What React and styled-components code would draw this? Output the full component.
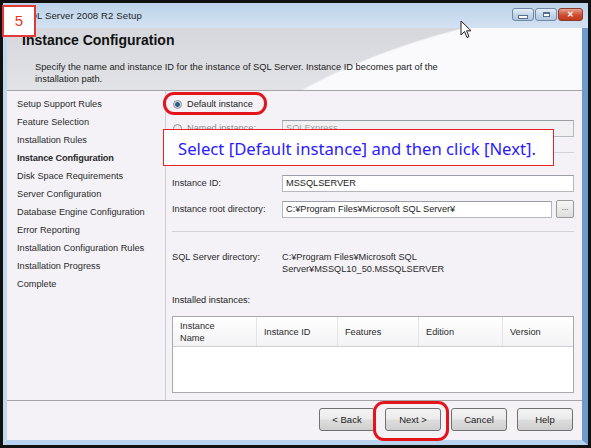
import React from 'react'
import styled, { createGlobalStyle } from 'styled-components'

const GlobalStyle = createGlobalStyle`
  html, body {
    margin: 0;
    padding: 0;
    background: #111;
  }
  * {
    box-sizing: border-box;
  }
`

const Page = styled.div`
  position: relative;
  width: 591px;
  height: 448px;
  padding: 3px 3px 3px 3px;
  background: #111;
  font-family: "Liberation Sans", Arial, sans-serif;
  color: #222;
  overflow: hidden;
`

const Window = styled.div`
  height: 100%;
  display: flex;
  flex-direction: column;
  background: #c2d7ee;
`

const TitleBar = styled.div`
  height: 25px;
  display: flex;
  align-items: center;
  padding: 0 5px 0 3px;
  background: linear-gradient(#bcd2ea, #d3e2f2);
`

const AppIcon = styled.div`
  width: 12px;
  height: 12px;
  margin-right: 5px;
  border-radius: 2px;
  background: linear-gradient(135deg, #d94c2c, #8c2214);
`

const Title = styled.div`
  font-size: 9.6px;
  color: #1e1e1e;
  letter-spacing: 0.1px;
`

const WinButtons = styled.div`
  margin-left: auto;
  display: flex;
  gap: 1px;
  margin-top: -2px;
`

const WinButton = styled.div`
  width: ${p => (p.$close ? 25 : 22)}px;
  height: 13px;
  border: 1px solid ${p => (p.$close ? '#8a3a2a' : '#6f88a8')};
  border-radius: 3px;
  background: ${p =>
    p.$close
      ? 'linear-gradient(#e8a291, #cf4b31 55%, #c0391f)'
      : 'linear-gradient(#e6eef8, #c3d4e8 55%, #b3c7df)'};
  display: flex;
  align-items: center;
  justify-content: center;
  color: #fff;
  font-size: 8px;
  font-weight: bold;
`

const MinGlyph = styled.div`
  width: 8px;
  height: 2px;
  margin-top: 4px;
  background: #fff;
  border: 1px solid #55708f;
  box-sizing: content-box;
`

const MaxGlyph = styled.div`
  width: 7px;
  height: 5px;
  border: 1px solid #55708f;
  border-top-width: 2px;
  background: #fff;
`

const ClientFrame = styled.div`
  flex: 1;
  display: flex;
  flex-direction: column;
  border-left: 4px solid #c3d8ef;
  border-right: 6px solid #6f9bcc;
  border-bottom: 5px solid #b8d1ed;
  background: #f4f2f7;
`

const Header = styled.div`
  height: 63px;
  padding: 4px 0 0 15px;
  border-bottom: 1px solid #a4a4a8;
  background:
    radial-gradient(ellipse 557px 290px at 700px 260px, #fafafc 99.4%, rgba(250, 250, 252, 0) 100%),
    linear-gradient(#d6d7dc, #e2e3e7);
`

const HeaderTitle = styled.div`
  font-size: 14px;
  font-weight: bold;
  line-height: 17px;
  color: #111;
`

const HeaderText = styled.div`
  margin: 12px 0 0 13px;
  width: 440px;
  font-size: 9.3px;
  line-height: 12px;
  color: #222;
`

const Body = styled.div`
  height: 309px;
  display: flex;
`

const Nav = styled.div`
  width: 159px;
  padding: 4px 0 0 10px;
  border-right: 1px solid #cfcdd3;
`

const NavItem = styled.div`
  font-size: 9.2px;
  line-height: 18px;
  color: #2a2a2a;
  font-weight: ${p => (p.$active ? 'bold' : 'normal')};
  letter-spacing: ${p => (p.$active ? '-0.15px' : '0')};
`

const Panel = styled.div`
  flex: 1;
  padding: 1px 8px 0 6px;
  display: flex;
  flex-direction: column;
  font-size: 9.2px;
`

const Row = styled.div`
  height: ${p => p.$h || 26}px;
  display: flex;
  align-items: center;
`

const Radio = styled.div`
  width: 9px;
  height: 9px;
  border-radius: 50%;
  border: 1px solid #8c8f94;
  background: ${p =>
    p.$checked
      ? 'radial-gradient(circle, #2e5a86 0 2px, #9fb6cc 2.5px, #eef0f3 3.5px)'
      : 'linear-gradient(#e4e4e6, #f8f8f8)'};
  margin: 0 5px 0 1px;
`

const RadioLabel = styled.div`
  color: ${p => (p.$disabled ? '#8a8a8a' : '#222')};
  width: ${p => p.$w || 'auto'};
`

const Label = styled.div`
  width: 110px;
  flex-shrink: 0;
  color: #2a2a2a;
`

const TextBox = styled.div`
  flex: 1;
  height: 17px;
  border: 1px solid #b5b8be;
  border-top-color: #9a9ea6;
  background: ${p => (p.$disabled ? '#f1f0f2' : '#fff')};
  color: ${p => (p.$disabled ? '#a0a0a0' : '#222')};
  padding-left: 3px;
  display: flex;
  align-items: center;
`

const BrowseButton = styled.div`
  width: 18px;
  height: 18px;
  margin-left: 4px;
  border: 1px solid #9a9a9a;
  border-radius: 2px;
  background: linear-gradient(#f6f6f6, #dedede);
  display: flex;
  align-items: center;
  justify-content: center;
  font-size: 8px;
  color: #333;
  padding-bottom: 3px;
`

const Separator = styled.div`
  height: 1px;
  background: #d4d2d8;
  margin-top: ${p => p.$mt}px;
  margin-bottom: ${p => p.$mb}px;
`

const InfoRow = styled.div`
  display: flex;
  line-height: 12px;
  margin-top: ${p => p.$mt || 0}px;
`

const InfoValue = styled.div`
  color: #2a2a2a;
`

const Table = styled.div`
  margin-top: 10px;
  height: 77px;
  border: 1px solid #a9a9ad;
  background: #fff;
`

const TableHead = styled.div`
  display: grid;
  grid-template-columns: 84px 81px 81px 84px 1fr;
  height: 30px;
  border-bottom: 1px solid #d0d0d4;
  background: linear-gradient(#ffffff, #f3f3f5);
`

const HeadCell = styled.div`
  display: flex;
  align-items: center;
  padding-left: 7px;
  line-height: 12px;
  color: #2a2a2a;
  border-right: ${p => (p.$last ? 'none' : '1px solid #e4e4e8')};
`

const Footer = styled.div`
  flex: 1;
  border-top: 1px solid #a4a4a8;
  display: flex;
  justify-content: flex-end;
  align-items: flex-start;
  gap: 10px;
  padding: 7px 9px 0 0;
`

const Button = styled.div`
  width: 56px;
  height: 23px;
  border: 1px solid #707070;
  border-radius: 3px;
  background: linear-gradient(#f3f3f3, #ebebeb 48%, #dddddd 52%, #cfcfcf);
  display: flex;
  align-items: center;
  justify-content: center;
  font-size: 9.5px;
  color: #222;
`

/* annotations drawn over the screenshot */
const StepBadge = styled.div`
  position: absolute;
  left: 2px;
  top: 5px;
  width: 34px;
  height: 32px;
  background: #fff;
  border: 2px solid #e23a36;
  color: #e8342f;
  font-size: 15px;
  display: flex;
  align-items: center;
  justify-content: center;
  padding-bottom: 1px;
`

const Oval = styled.div`
  position: absolute;
  left: ${p => p.$x}px;
  top: ${p => p.$y}px;
  width: ${p => p.$w}px;
  height: ${p => p.$h}px;
  border: 3px solid #e3141c;
  border-radius: 11px;
`

const Callout = styled.div`
  position: absolute;
  left: 163px;
  top: 129px;
  width: 391px;
  height: 37px;
  background: #fff;
  border: 1.5px solid #e8202a;
  color: #2b1cff;
  font-family: "Noto Sans", "Liberation Sans", sans-serif;
  font-size: 16.7px;
  display: flex;
  align-items: center;
  padding: 2px 0 0 14px;
  white-space: nowrap;
`

const Cursor = styled.svg`
  position: absolute;
  left: 460px;
  top: 20px;
`

const navItems = [
  'Setup Support Rules',
  'Feature Selection',
  'Installation Rules',
  'Instance Configuration',
  'Disk Space Requirements',
  'Server Configuration',
  'Database Engine Configuration',
  'Error Reporting',
  'Installation Configuration Rules',
  'Installation Progress',
  'Complete',
]

const columns = ['Instance Name', 'Instance ID', 'Features', 'Edition', 'Version']

export default function App() {
  return (
    <Page>
      <GlobalStyle />
      <Window>
        <TitleBar>
          <AppIcon />
          <Title>SQL Server 2008 R2 Setup</Title>
          <WinButtons>
            <WinButton><MinGlyph /></WinButton>
            <WinButton><MaxGlyph /></WinButton>
            <WinButton $close>✕</WinButton>
          </WinButtons>
        </TitleBar>
        <ClientFrame>
          <Header>
            <HeaderTitle>Instance Configuration</HeaderTitle>
            <HeaderText>
              Specify the name and instance ID for the instance of SQL Server. Instance ID becomes part of the
              installation path.
            </HeaderText>
          </Header>
          <Body>
            <Nav>
              {navItems.map(item => (
                <NavItem key={item} $active={item === 'Instance Configuration'}>{item}</NavItem>
              ))}
            </Nav>
            <Panel>
              <Row $h={24}>
                <Radio $checked />
                <RadioLabel>Default instance</RadioLabel>
              </Row>
              <Row $h={24}>
                <Radio />
                <RadioLabel $disabled $w="95px">Named instance:</RadioLabel>
                <TextBox $disabled>SQLExpress</TextBox>
              </Row>
              <Separator $mt={12} $mb={17} />
              <Row>
                <Label>Instance ID:</Label>
                <TextBox>MSSQLSERVER</TextBox>
              </Row>
              <Row>
                <Label>Instance root directory:</Label>
                <TextBox>C:¥Program Files¥Microsoft SQL Server¥</TextBox>
                <BrowseButton>...</BrowseButton>
              </Row>
              <Separator $mt={9} $mb={0} />
              <InfoRow $mt={19}>
                <Label>SQL Server directory:</Label>
                <InfoValue>
                  C:¥Program Files¥Microsoft SQL<br />
                  Server¥MSSQL10_50.MSSQLSERVER
                </InfoValue>
              </InfoRow>
              <InfoRow $mt={19}>Installed instances:</InfoRow>
              <Table>
                <TableHead>
                  {columns.map((c, i) => (
                    <HeadCell key={c} $last={i === columns.length - 1}>
                      {c === 'Instance Name' ? <span>Instance<br />Name</span> : c}
                    </HeadCell>
                  ))}
                </TableHead>
              </Table>
            </Panel>
          </Body>
          <Footer>
            <Button>&lt; Back</Button>
            <Button>Next &gt;</Button>
            <Button>Cancel</Button>
            <Button>Help</Button>
          </Footer>
        </ClientFrame>
      </Window>

      <StepBadge>5</StepBadge>
      <Oval $x={163} $y={92} $w={104} $h={23} />
      <Oval $x={373} $y={401} $w={76} $h={40} />
      <Callout>Select [Default instance] and then click [Next].</Callout>
      <Cursor width="12" height="19" viewBox="0 0 12 19">
        <path d="M1 1 L1 15 L4.5 11.5 L7 17.5 L9 16.6 L6.6 10.8 L11 10.8 Z" fill="#fff" stroke="#222" strokeWidth="1" strokeLinejoin="round" />
      </Cursor>
    </Page>
  )
}
